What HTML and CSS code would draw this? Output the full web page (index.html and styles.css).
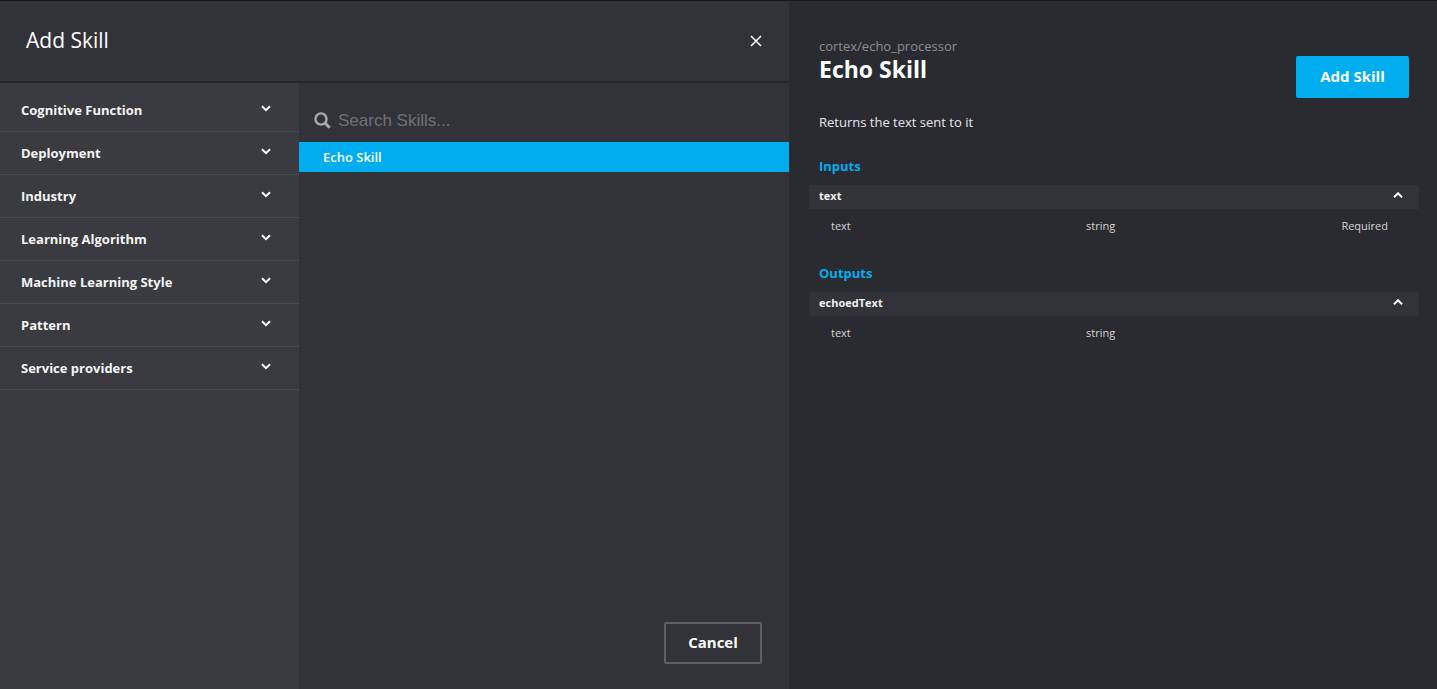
FILE: index.html
```html
<!DOCTYPE html>
<html lang="en">

<head>
    <meta charset="UTF-8">
    <title>Add Skill</title>
    <link rel="stylesheet" href="styles.css">
</head>

<body>
    <div class="modal">
        <!-- Left side: filters and skill list -->
        <div class="picker">
            <header class="picker-header">
                <h1>Add Skill</h1>
                <svg class="close-icon" width="12" height="12" viewBox="0 0 12 12">
                    <path d="M1 1L11 11M11 1L1 11" />
                </svg>
            </header>
            <div class="picker-body">
                <aside class="filters">
                    <div class="filter">
                        <span>Cognitive Function</span>
                        <svg class="chevron" width="10" height="7" viewBox="0 0 10 7"><path d="M1 1.2L5 5.2L9 1.2" /></svg>
                    </div>
                    <div class="filter">
                        <span>Deployment</span>
                        <svg class="chevron" width="10" height="7" viewBox="0 0 10 7"><path d="M1 1.2L5 5.2L9 1.2" /></svg>
                    </div>
                    <div class="filter">
                        <span>Industry</span>
                        <svg class="chevron" width="10" height="7" viewBox="0 0 10 7"><path d="M1 1.2L5 5.2L9 1.2" /></svg>
                    </div>
                    <div class="filter">
                        <span>Learning Algorithm</span>
                        <svg class="chevron" width="10" height="7" viewBox="0 0 10 7"><path d="M1 1.2L5 5.2L9 1.2" /></svg>
                    </div>
                    <div class="filter">
                        <span>Machine Learning Style</span>
                        <svg class="chevron" width="10" height="7" viewBox="0 0 10 7"><path d="M1 1.2L5 5.2L9 1.2" /></svg>
                    </div>
                    <div class="filter">
                        <span>Pattern</span>
                        <svg class="chevron" width="10" height="7" viewBox="0 0 10 7"><path d="M1 1.2L5 5.2L9 1.2" /></svg>
                    </div>
                    <div class="filter">
                        <span>Service providers</span>
                        <svg class="chevron" width="10" height="7" viewBox="0 0 10 7"><path d="M1 1.2L5 5.2L9 1.2" /></svg>
                    </div>
                </aside>
                <section class="skills">
                    <div class="search">
                        <svg class="search-icon" width="17" height="17" viewBox="0 0 17 17">
                            <circle cx="7" cy="7" r="5.6" />
                            <path d="M11 11L15.7 15.7" />
                        </svg>
                        <span class="search-placeholder">Search Skills...</span>
                    </div>
                    <div class="skill-item">Echo Skill</div>
                    <div class="skills-footer">
                        <button class="cancel-btn">Cancel</button>
                    </div>
                </section>
            </div>
        </div>

        <!-- Right side: skill detail -->
        <main class="detail">
            <div class="detail-head">
                <div>
                    <div class="skill-path">cortex/echo_processor</div>
                    <h2>Echo Skill</h2>
                </div>
                <button class="add-btn">Add Skill</button>
            </div>
            <p class="description">Returns the text sent to it</p>

            <h3>Inputs</h3>
            <div class="param-bar">
                <span>text</span>
                <svg class="chevron" width="10" height="7" viewBox="0 0 10 7"><path d="M1 5.2L5 1.2L9 5.2" /></svg>
            </div>
            <div class="param-row">
                <span class="param-name">text</span>
                <span class="param-type">string</span>
                <span class="param-req">Required</span>
            </div>

            <h3 class="outputs">Outputs</h3>
            <div class="param-bar">
                <span>echoedText</span>
                <svg class="chevron" width="10" height="7" viewBox="0 0 10 7"><path d="M1 5.2L5 1.2L9 5.2" /></svg>
            </div>
            <div class="param-row">
                <span class="param-name">text</span>
                <span class="param-type">string</span>
            </div>
        </main>
    </div>
</body>

</html>
```

FILE: styles.css
```css
html,
body {
    height: 100%;
}

body {
    margin: 0;
    padding: 0;
    background-color: #2a2b30;
    font-family: "Open Sans", Arial, sans-serif;
    color: #fff;
    overflow: hidden;
}

.modal {
    display: flex;
    height: 100%;
    box-sizing: border-box;
    border-top: 1px solid #17181b;
}

/* Left side */
.picker {
    width: 789px;
    display: flex;
    flex-direction: column;
    background-color: #323338;
}

.picker-header {
    height: 80px;
    flex-shrink: 0;
    display: flex;
    align-items: center;
    justify-content: space-between;
    padding: 0 27px 0 26px;
    border-bottom: 2px solid #26272b;
}

.picker-header h1 {
    margin: 0 0 2px;
    font-size: 21px;
    font-weight: 400;
}

.close-icon path {
    fill: none;
    stroke: #fff;
    stroke-width: 1.6;
}

.picker-body {
    flex: 1;
    display: flex;
    min-height: 0;
}

.filters {
    width: 299px;
    flex-shrink: 0;
    box-sizing: border-box;
    padding-top: 6px;
    background-color: #3a3b40;
}

.filter {
    height: 43px;
    box-sizing: border-box;
    display: flex;
    align-items: center;
    justify-content: space-between;
    padding: 0 28px 0 21px;
    border-bottom: 1px solid #4a4b50;
    font-size: 13px;
    font-weight: 700;
    color: #f4f4f5;
}

.chevron {
    flex-shrink: 0;
    margin-top: -4px;
}

.chevron path {
    fill: none;
    stroke: #fff;
    stroke-width: 2;
}

.skills {
    flex: 1;
    display: flex;
    flex-direction: column;
}

.search {
    height: 59px;
    box-sizing: border-box;
    flex-shrink: 0;
    display: flex;
    align-items: center;
    gap: 7px;
    padding: 16px 0 0 15px;
}

.search-icon circle,
.search-icon path {
    fill: none;
    stroke: #a9aab0;
}

.search-icon circle {
    stroke-width: 2.4;
}

.search-icon path {
    stroke-width: 3;
}

.search-placeholder {
    font-family: "Liberation Sans", Arial, sans-serif;
    font-size: 17px;
    color: #707176;
}

.skill-item {
    height: 30px;
    flex-shrink: 0;
    display: flex;
    align-items: center;
    padding-left: 24px;
    background-color: #00aeef;
    font-size: 13px;
    font-weight: 600;
}

.skills-footer {
    flex: 1;
    display: flex;
    align-items: flex-end;
    justify-content: flex-end;
    padding: 0 27px 25px 0;
}

.cancel-btn {
    width: 98px;
    height: 42px;
    padding: 0 0 2px;
    background: transparent;
    border: 2px solid #5d5e66;
    border-radius: 2px;
    color: #fff;
    font-family: inherit;
    font-size: 15px;
    font-weight: 700;
}

/* Right side */
.detail {
    flex: 1;
    min-width: 0;
    padding: 36px 18px 0 20px;
    background-color: #2a2b30;
}

.detail-head {
    display: flex;
    justify-content: space-between;
    padding-left: 10px;
}

.skill-path {
    font-size: 13px;
    line-height: 18px;
    color: #8c8d92;
}

.detail h2 {
    margin: 0;
    font-size: 23px;
    line-height: 28px;
    font-weight: 700;
}

.add-btn {
    width: 113px;
    height: 42px;
    margin: 19px 10px 0 0;
    padding: 0 0 2px;
    background-color: #00aeef;
    border: none;
    border-radius: 2px;
    color: #fff;
    font-family: inherit;
    font-size: 15px;
    font-weight: 700;
}

.description {
    margin: 15px 0 0 10px;
    font-size: 13px;
    line-height: 18px;
    color: #e6e6e8;
}

.detail h3 {
    margin: 26px 0 0 10px;
    font-size: 13px;
    line-height: 18px;
    font-weight: 700;
    color: #00aeef;
}

.detail h3.outputs {
    margin-top: 21px;
}

.param-bar {
    height: 24px;
    margin-top: 10px;
    display: flex;
    align-items: center;
    justify-content: space-between;
    padding: 0 16px 0 10px;
    background-color: #323338;
    font-size: 11px;
    font-weight: 700;
    color: #f0f0f1;
}

.param-bar span {
    margin-bottom: 4px;
}

.param-row {
    height: 34px;
    box-sizing: border-box;
    display: flex;
    align-items: center;
    padding: 0 0 2px 22px;
    font-size: 11px;
    color: #d4d4d6;
}

.param-name {
    width: 255px;
}

.param-req {
    margin-left: auto;
    margin-right: 31px;
}
```
